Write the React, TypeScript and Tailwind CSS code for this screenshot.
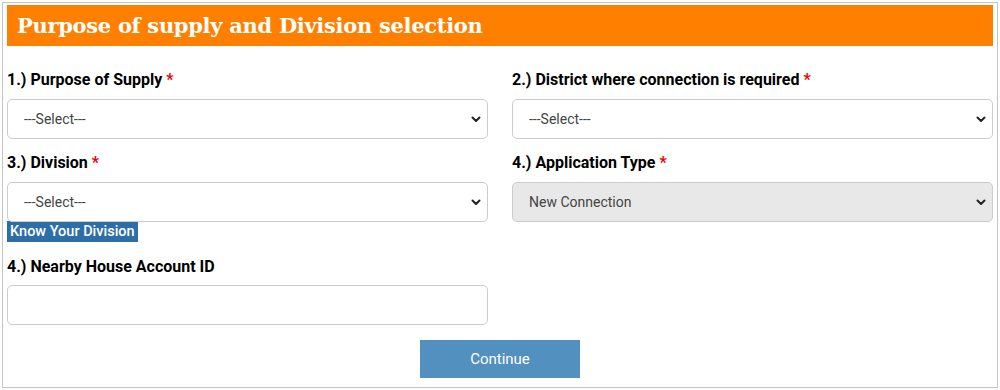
import React from 'react';

const Chevron = () => (
  <svg
    className="pointer-events-none absolute right-[6px] top-1/2 -translate-y-1/2"
    width="12"
    height="12"
    viewBox="0 0 12 12"
    fill="none"
  >
    <path d="M2.5 4.5 6 8l3.5-3.5" stroke="#222" strokeWidth="2" strokeLinecap="round" strokeLinejoin="round" />
  </svg>
);

function Label({ text, required }: { text: string; required?: boolean }) {
  return (
    <div className="h-[24px] leading-[24px] mb-[7px] text-[16px] font-bold text-black">
      {text}
      {required && <span className="text-[#ee0000] ml-[4px]">*</span>}
    </div>
  );
}

function SelectBox({ value, disabled }: { value: string; disabled?: boolean }) {
  return (
    <div className="relative">
      <select
        disabled={disabled}
        defaultValue={value}
        className={
          'block w-full h-[40px] appearance-none rounded-[5px] border border-[#cccccc] pl-[16px] pr-[24px] text-[14px] outline-none ' +
          (disabled ? 'bg-[#e8e8e8] text-[#444444]' : 'bg-white text-[#444444]')
        }
      >
        <option value={value}>{value}</option>
      </select>
      <Chevron />
    </div>
  );
}

export default function App() {
  return (
    <div className="bg-white min-h-[390px] pt-[2px] pl-[2px]" style={{ fontFamily: 'Roboto, "Liberation Sans", sans-serif' }}>
      <div className="w-[996px] h-[386px] border border-[#c4c4c4] p-[4px] pt-[2px]">
        <div className="h-[41px] bg-[#ff8000] pl-[10px] flex items-center">
          <h1
            className="text-white text-[21px] font-bold tracking-[-0.3px]"
            style={{ fontFamily: '"DejaVu Serif", "Liberation Serif", serif' }}
          >
            Purpose of supply and Division selection
          </h1>
        </div>

        <div className="mt-[22px] grid grid-cols-2 gap-x-[24px]">
          <div>
            <Label text="1.) Purpose of Supply" required />
            <SelectBox value="---Select---" />
          </div>
          <div>
            <Label text="2.) District where connection is required" required />
            <SelectBox value="---Select---" />
          </div>

          <div className="mt-[12px]">
            <Label text="3.) Division" required />
            <SelectBox value="---Select---" />
            <button className="block h-[21px] mt-[-1px] bg-[#2e6ea6] px-[3px] text-[14.5px] font-medium text-white leading-[21px]">
              Know Your Division
            </button>
          </div>
          <div className="mt-[12px]">
            <Label text="4.) Application Type" required />
            <SelectBox value="New Connection" disabled />
          </div>

          <div className="mt-[13px]">
            <Label text="4.) Nearby House Account ID" />
            <input
              type="text"
              className="block w-full h-[40px] mt-[-1px] rounded-[5px] border border-[#cccccc] bg-white px-[12px] text-[14px] outline-none"
            />
          </div>
          <div />
        </div>

        <div className="mt-[15px] flex justify-center">
          <button className="w-[160px] h-[38px] bg-[#5190bf] text-white text-[15px]">Continue</button>
        </div>
      </div>
    </div>
  );
}
